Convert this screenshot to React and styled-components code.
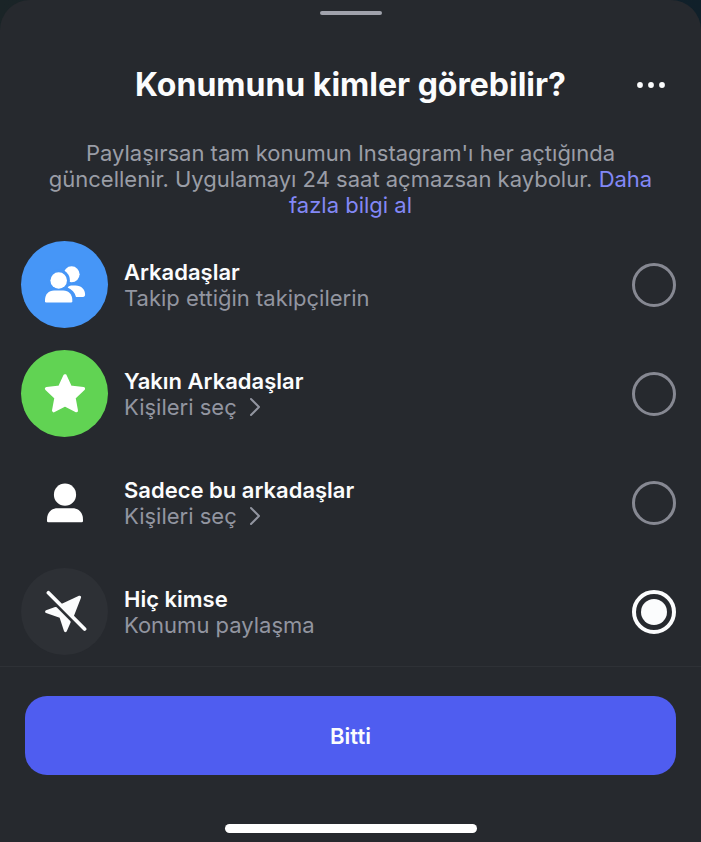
import React, { useState } from "react";
import styled, { createGlobalStyle } from "styled-components";

const GlobalStyle = createGlobalStyle`
  * {
    box-sizing: border-box;
  }
  body {
    margin: 0;
    background: linear-gradient(90deg, #1a2427, #10202a);
    font-family: Inter, "Liberation Sans", sans-serif;
  }
  button {
    font-family: inherit;
    border: 0;
    padding: 0;
    background: none;
    cursor: pointer;
  }
`;

const Sheet = styled.main`
  min-height: 100vh;
  display: flex;
  flex-direction: column;
  padding-top: 11px;
  background: #26292e;
  border-radius: 30px 30px 0 0;
  color: #fbfcfd;
`;

const Handle = styled.div`
  width: 62px;
  height: 4px;
  margin: 0 auto;
  border-radius: 2px;
  background: #a0a2ac;
`;

const Header = styled.header`
  display: grid;
  grid-template-columns: 44px 1fr 44px;
  align-items: center;
  margin-top: 48px;
  padding: 0 28px;
`;

const Title = styled.h1`
  margin: 0;
  font-size: 32px;
  line-height: 44px;
  font-weight: 700;
  text-align: center;
`;

const MoreButton = styled.button`
  height: 44px;
  display: flex;
  align-items: center;
  justify-content: center;
`;

const Description = styled.p`
  margin: 33px 44px 0;
  font-size: 22px;
  line-height: 26px;
  text-align: center;
  color: #9a9da6;
`;

const Link = styled.a`
  color: #8388f6;
  text-decoration: none;
`;

const Options = styled.div`
  display: flex;
  flex-direction: column;
  gap: 22px;
  margin-top: 23px;
  padding: 0 25px 11px 21px;
`;

const Option = styled.div`
  display: flex;
  align-items: center;
`;

const Avatar = styled.div`
  width: 87px;
  height: 87px;
  flex: none;
  display: flex;
  align-items: center;
  justify-content: center;
  border-radius: 50%;
  background: ${(props) => props.$color};
`;

const OptionText = styled.div`
  flex: 1;
  display: flex;
  flex-direction: column;
  align-items: flex-start;
  padding-left: 16px;
  line-height: 26px;
`;

const OptionTitle = styled.label`
  font-size: 22px;
  font-weight: 600;
  cursor: pointer;
`;

const OptionHint = styled.span`
  font-size: 22px;
  color: #9295a0;
`;

const PickButton = styled.button`
  display: flex;
  align-items: center;
  gap: 12px;
  font-size: 22px;
  line-height: 26px;
  color: #9295a0;
`;

const Radio = styled.input`
  appearance: none;
  width: 44px;
  height: 44px;
  flex: none;
  margin: 0;
  border: 3px solid #868892;
  border-radius: 50%;
  cursor: pointer;

  &:checked {
    padding: 5px;
    border: 4px solid #fbfcfd;
    background: #fbfcfd content-box;
  }
`;

const Footer = styled.footer`
  flex: 1;
  display: flex;
  flex-direction: column;
  padding: 29px 25px 9px;
  border-top: 1px solid #2e3136;
`;

const DoneButton = styled.button`
  height: 79px;
  border-radius: 22px;
  background: #4f5df0;
  color: #fbfcfd;
  font-size: 22px;
  font-weight: 600;
`;

const HomeIndicator = styled.div`
  width: 252px;
  height: 9px;
  margin: auto auto 0;
  border-radius: 5px;
  background: #ffffff;
`;

const FriendsIcon = () => (
  <svg width="44" height="44" viewBox="0 0 44 44" fill="#fff">
    <circle cx="28.6" cy="11.3" r="8" />
    <path d="M24.6 24.6C25.4 23 27 22.6 30 22.6H32.5C38.5 22.6 42.1 26.8 42.1 31.6C42.1 33.2 41.4 34 40 34H33C31.8 29.6 29 26.6 24.6 24.6Z" />
    <circle cx="15.7" cy="17.5" r="11.2" fill="#4696f7" />
    <circle cx="15.7" cy="17.5" r="8.3" />
    <path d="M2 36.8C2 31.4 5.6 27.4 11 27.4H20.3C25.7 27.4 29.3 31.4 29.3 36.8V38.2Q29.3 39.5 28 39.5H3.3Q2 39.5 2 38.2Z" />
  </svg>
);

const StarIcon = () => (
  <svg width="44" height="44" viewBox="0 0 44 44">
    <path
      d="M22 4L27.2 15.3L40.3 16.8L30.8 25.6L33.2 38.5L22 32.7L10.8 38.5L13.2 25.6L3.7 16.8L16.8 15.3Z"
      fill="#fff"
      stroke="#fff"
      strokeWidth="3.6"
      strokeLinejoin="round"
    />
  </svg>
);

const PersonIcon = () => (
  <svg width="44" height="44" viewBox="0 0 44 44" fill="#fff">
    <circle cx="22" cy="13.7" r="11.1" />
    <path d="M4 38.5C4 32 8 27.3 14.5 27.3H29.5C36 27.3 40 32 40 38.5V40Q40 41.3 38.7 41.3H5.3Q4 41.3 4 40Z" />
  </svg>
);

const LocationOffIcon = () => (
  <svg
    width="44"
    height="44"
    viewBox="0 0 44 44"
    fill="#fbfcfd"
    stroke="#fbfcfd"
    strokeLinecap="round"
    strokeLinejoin="round"
  >
    <path d="M19.5 15.2L36.6 7.2L29.6 25.2Z" strokeWidth="3" />
    <path d="M12.6 18.4L3.6 21.7L17.9 26.7L22.4 40.6L26.2 32Z" strokeWidth="3" />
    <path d="M5.4 2.8L41.6 39" strokeWidth="3.7" />
  </svg>
);

const ChevronIcon = () => (
  <svg width="12" height="20" viewBox="0 0 12 20" fill="none">
    <path
      d="M2 2L10 10L2 18"
      stroke="currentColor"
      strokeWidth="2"
      strokeLinecap="round"
      strokeLinejoin="round"
    />
  </svg>
);

const options = [
  {
    id: "friends",
    title: "Arkadaşlar",
    hint: "Takip ettiğin takipçilerin",
    color: "#4696f7",
    icon: <FriendsIcon />,
  },
  {
    id: "close",
    title: "Yakın Arkadaşlar",
    hint: "Kişileri seç",
    pick: true,
    color: "#61d353",
    icon: <StarIcon />,
  },
  {
    id: "only",
    title: "Sadece bu arkadaşlar",
    hint: "Kişileri seç",
    pick: true,
    color: "transparent",
    icon: <PersonIcon />,
  },
  {
    id: "nobody",
    title: "Hiç kimse",
    hint: "Konumu paylaşma",
    color: "#2d3035",
    icon: <LocationOffIcon />,
  },
];

const App = () => {
  const [selected, setSelected] = useState("nobody");

  return (
    <>
      <GlobalStyle />
      <Sheet>
        <Handle />
        <Header>
          <span />
          <Title>Konumunu kimler görebilir?</Title>
          <MoreButton aria-label="Diğer">
            <svg width="28" height="6" viewBox="0 0 28 6" fill="#fbfcfd">
              <circle cx="3" cy="3" r="2.9" />
              <circle cx="14" cy="3" r="2.9" />
              <circle cx="25" cy="3" r="2.9" />
            </svg>
          </MoreButton>
        </Header>
        <Description>
          Paylaşırsan tam konumun Instagram'ı her açtığında güncellenir.
          Uygulamayı 24 saat açmazsan kaybolur.{" "}
          <Link href="#">Daha fazla bilgi al</Link>
        </Description>
        <Options role="radiogroup">
          {options.map((item) => (
            <Option key={item.id}>
              <Avatar $color={item.color}>{item.icon}</Avatar>
              <OptionText>
                <OptionTitle htmlFor={item.id}>{item.title}</OptionTitle>
                {item.pick ? (
                  <PickButton>
                    {item.hint}
                    <ChevronIcon />
                  </PickButton>
                ) : (
                  <OptionHint>{item.hint}</OptionHint>
                )}
              </OptionText>
              <Radio
                type="radio"
                name="audience"
                id={item.id}
                checked={selected === item.id}
                onChange={() => setSelected(item.id)}
              />
            </Option>
          ))}
        </Options>
        <Footer>
          <DoneButton>Bitti</DoneButton>
          <HomeIndicator />
        </Footer>
      </Sheet>
    </>
  );
};

export default App;
